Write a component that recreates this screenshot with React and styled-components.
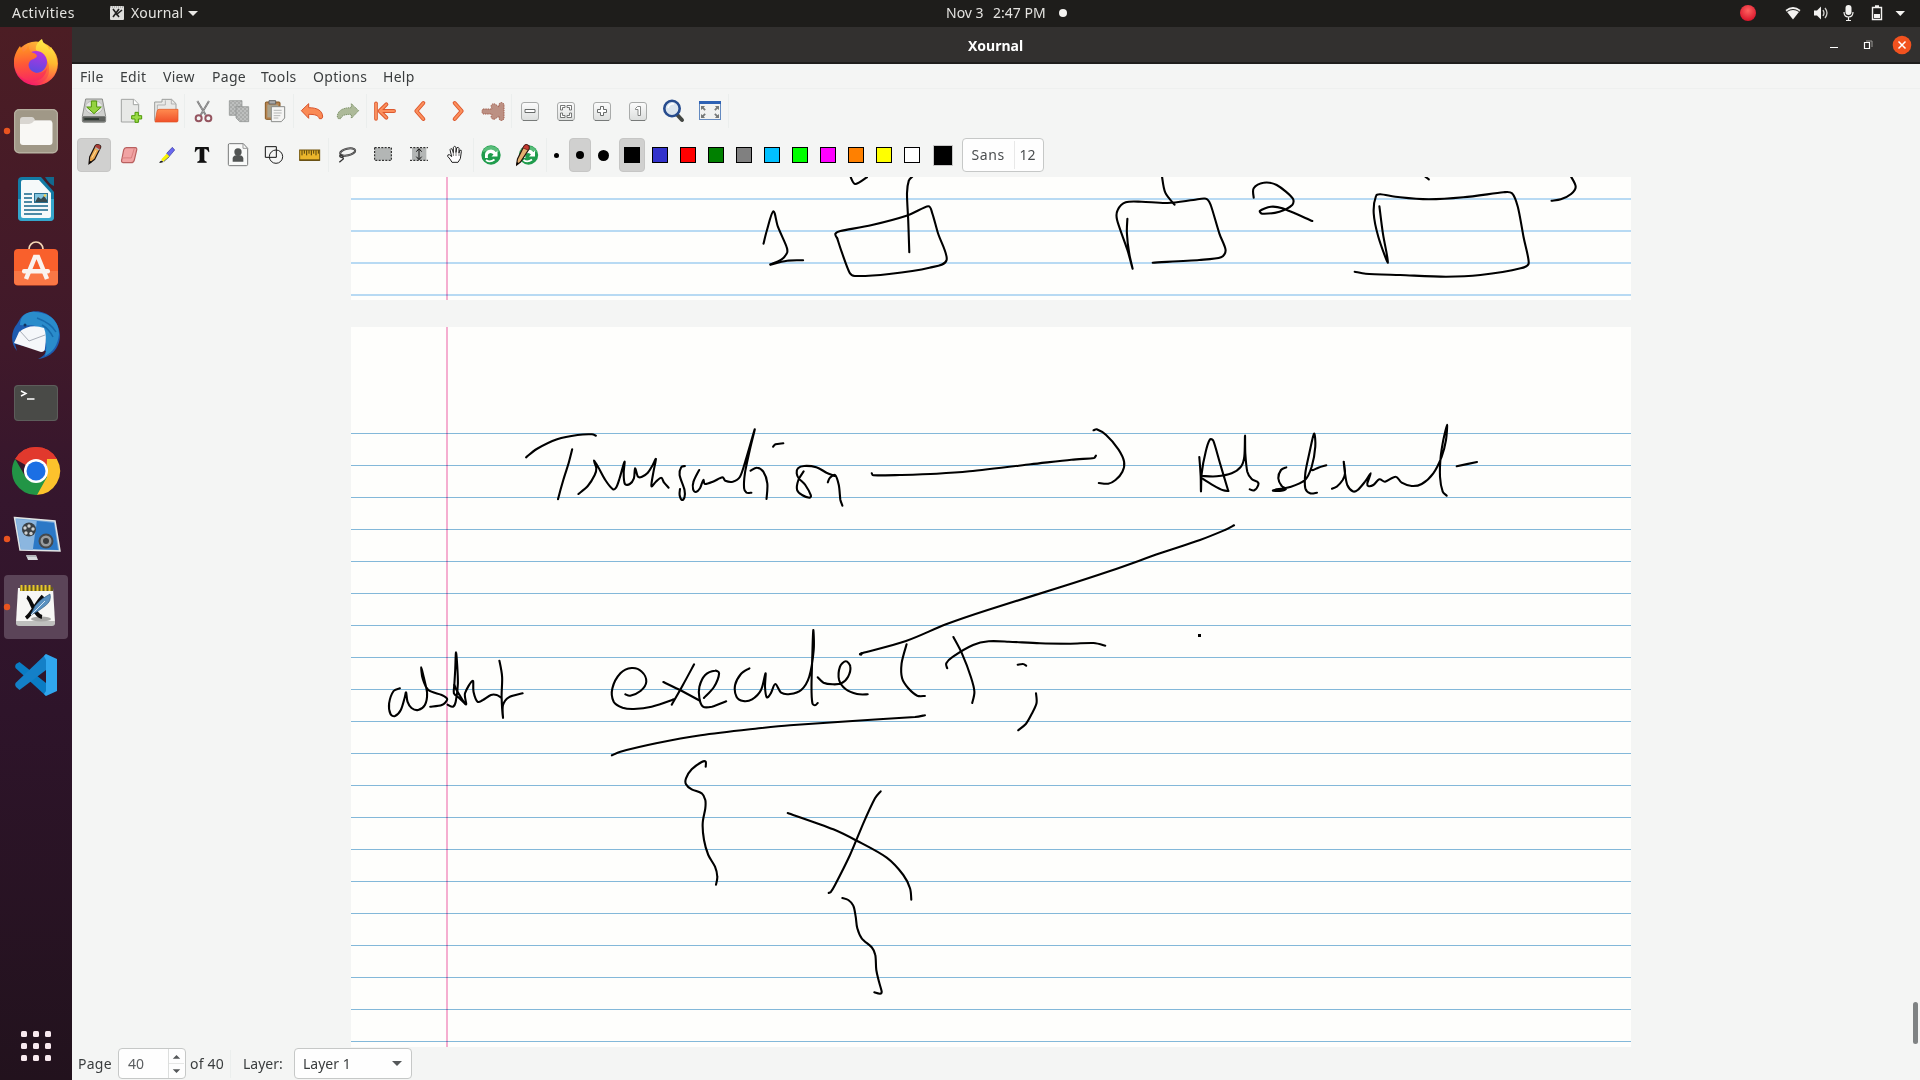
import React from "react";
import styled, { createGlobalStyle } from "styled-components";

const GlobalStyle = createGlobalStyle`
  * { box-sizing: border-box; }
  body { margin: 0; background: #f4f5f4; font-family: "Noto Sans", "Open Sans", sans-serif; font-size: 14px; line-height: 18px; }
  svg { display: block; flex: none; }
`;

const Desktop = styled.div`
  width: 1920px;
  height: 1080px;
  display: flex;
  flex-direction: column;
  overflow: hidden;
  white-space: nowrap;
`;
const TopBar = styled.header`
  height: 27px;
  flex: none;
  background: #1e1d1b;
  color: #e4e3e0;
  display: grid;
  grid-template-columns: 946px 1fr 184px;
  align-items: center;
`;
const TopGroup = styled.div`
  display: flex;
  align-items: center;
  height: 27px;
  padding-left: ${(p) => p.$pad || 0}px;
  padding-bottom: 1px;
`;
const Text = styled.span`
  width: ${(p) => (p.$w ? p.$w + "px" : "auto")};
  letter-spacing: ${(p) => p.$ls || 0}px;
  margin-left: ${(p) => p.$ml || 0}px;
  flex: none;
`;
const Below = styled.div`
  flex: 1;
  display: flex;
  min-height: 0;
`;
const Dock = styled.nav`
  width: 72px;
  flex: none;
  display: flex;
  flex-direction: column;
  justify-content: space-between;
  padding: 1px 0 0;
  background: linear-gradient(180deg, #4c1d24 0%, #40192a 30%, #35162d 45%, #2e142a 65%, #22121d 100%);
`;
const DockList = styled.div`
  display: flex;
  flex-direction: column;
`;
const AppGrid = styled.div`
  display: grid;
  grid-template-columns: repeat(3, 6px);
  gap: 6px;
  padding: 0 0 19px 21px;
`;
const GridDot = styled.i`
  height: 6px;
  border-radius: 1.5px;
  background: #f8e9ef;
`;
const Win = styled.main`
  flex: 1;
  display: flex;
  flex-direction: column;
  min-width: 0;
  background: #f4f5f4;
  color: #3a3d3e;
`;
const TitleBar = styled.div`
  height: 37px;
  flex: none;
  display: grid;
  grid-template-columns: 1fr auto 1fr;
  align-items: center;
  background: #32302f;
  border-bottom: 2px solid #1f1d1c;
  color: #fff;
  font-weight: 700;
`;
const Title = styled.span`
  padding-top: 2px;
  margin-right: 1px;
`;
const WinButtons = styled.div`
  justify-self: end;
  padding-right: 5px;
`;
const MenuBar = styled.div`
  height: 25px;
  flex: none;
  display: flex;
  align-items: center;
  padding: 2px 0 0 8px;
  border-bottom: 1px solid #eef0ef;
`;
const ToolRow = styled.div`
  height: 44px;
  flex: none;
  display: flex;
  align-items: center;
  padding-left: 4px;
`;
const Tool = styled.div`
  width: ${(p) => p.$w || 36}px;
  height: 34px;
  display: flex;
  align-items: center;
  justify-content: center;
  flex: none;
`;
const NibSizes = styled.div`
  display: flex;
  margin: 0 2px 0 -2px;
`;
const Pressed = styled.div`
  width: ${(p) => p.$w}px;
  height: 34px;
  display: flex;
  align-items: center;
  justify-content: center;
  border-radius: 4px;
  background: ${(p) => (p.$on ? "#d0d0cf" : "transparent")};
  border: 1px solid ${(p) => (p.$on ? "#c6c6c5" : "transparent")};
`;
const Sep = styled.i`
  width: 1px;
  height: 34px;
  flex: none;
  background: #ebeeed;
`;
const Dot = styled.i`
  width: ${(p) => p.$d}px;
  height: ${(p) => p.$d}px;
  border-radius: 50%;
  background: #000;
`;
const Swatch = styled.i`
  width: 16px;
  height: 16px;
  background: ${(p) => p.$c};
  border: 1px solid #000;
`;
const BigSwatch = styled.i`
  width: 20px;
  height: 21px;
  background: #000;
  border: 1px solid #c8c8c8;
`;
const FontButton = styled.div`
  width: 82px;
  height: 34px;
  display: grid;
  grid-template-columns: 52px 1fr;
  align-items: center;
  background: #fefefe;
  border: 1px solid #c6c8c7;
  border-radius: 4px;
  color: #4b4e50;
  margin-left: 2px;
`;
const FontCell = styled.span`
  height: 28px;
  line-height: 28px;
  padding-left: ${(p) => p.$pad}px;
  letter-spacing: ${(p) => p.$ls || 0}px;
  border-right: ${(p) => (p.$line ? "1px solid #e8e8e8" : "0")};
`;
const Viewport = styled.section`
  position: relative;
  height: 870px;
  flex: none;
  overflow: hidden;
  display: flex;
  flex-direction: column;
  gap: 27px;
  padding-left: 279px;
`;
const Sheet = styled.div`
  width: 1280px;
  height: ${(p) => p.$h}px;
  flex: none;
  display: flex;
  flex-direction: column;
  background: #fefefc;
  padding-top: ${(p) => p.$top}px;
  overflow: hidden;
  background-image: linear-gradient(#f5aed0, #f5aed0);
  background-size: 2px 100%;
  background-position: 95px 0;
  background-repeat: no-repeat;
`;
const Rule = styled.i`
  height: 32px;
  flex: none;
  border-top: ${(p) => (p.$soft ? "2px solid #b9dbf6" : "1px solid #84b9dc")};
  mix-blend-mode: multiply;
`;
const Ink = styled.svg`
  position: absolute;
  left: 0;
  top: 0;
`;
const ScrollThumb = styled.i`
  position: absolute;
  right: 2px;
  top: 825px;
  width: 5px;
  height: 42px;
  border-radius: 3px;
  background: #7f8283;
`;
const StatusBar = styled.footer`
  flex: 1;
  display: flex;
  align-items: center;
  padding-left: 6px;
`;
const Spin = styled.div`
  width: 68px;
  height: 31px;
  display: grid;
  grid-template-columns: 1fr 16px;
  background: #fefefe;
  border: 1px solid #c6c8c7;
  border-radius: 4px;
  color: #5c5f61;
`;
const SpinValue = styled.span`
  padding-left: 9px;
  line-height: 29px;
  border-right: 1px solid #dcdedd;
`;
const Combo = styled.div`
  width: 118px;
  height: 31px;
  display: flex;
  align-items: center;
  justify-content: space-between;
  padding: 0 9px 0 8px;
  background: #fefefe;
  border: 1px solid #c6c8c7;
  border-radius: 4px;
`;
const StatusSep = styled.i`
  width: 1px;
  height: 28px;
  margin: 0 12px 0 2px;
  background: #ebeeed;
`;

/* Pen strokes: each group has its own origin and resolution. */
const inkGroups = [
  { ox: 740, oy: 170, sx: 1.7422, sy: 3, strokes: [
    "192,18 201,42 221,22",
    "300,20 294,32 291,70 293,150 295,247",
    "41,221 47,180 58,124 66,170 81,230 82,248 72,269 53,283",
    "53,284 82,272 110,271",
    "169,203 177,245 191,308 200,318 260,312 330,293 360,270 345,190 335,130 328,109 290,137 230,165 175,183 166,192 170,207",
    "735,18 741,68 757,104",
    "675,146 674,190 678,250 684,296 675,240 657,150 658,120 672,97 700,95 745,99 790,90 812,86 820,105 835,190 846,240 838,262 800,270 719,278",
    "895,83 895,55 912,38 935,45 963,85 962,105 940,125 910,131 906,122 925,110 945,115 997,153",
    "1114,109 1120,190 1129,278 1112,200 1104,130 1108,78 1116,73 1150,82 1200,88 1260,82 1330,67 1345,70 1355,110 1365,200 1374,280 1360,295 1290,315 1230,320 1150,315 1090,311 1071,305",
    "1194,20 1200,28",
    "1448,20 1456,50 1448,72 1430,88 1414,92",
  ]},
  { ox: 500, oy: 410, sx: 2.45, sy: 3, strokes: [
    "64,142 90,117 140,88 190,75 225,73 235,77",
    "177,118 168,160 155,210 142,268",
    "192,252 215,228 232,195 236,175 230,152 240,170 258,210 277,238 285,232 293,205 305,155 303,190 306,222 318,222 328,205 331,175 338,200 348,200 362,188 374,165 382,147 376,185 371,228 382,215 395,203 402,218 413,233",
    "453,168 444,172 440,195 452,240 452,262 446,270 440,255 441,237",
    "488,180 474,215 473,238 480,246 490,235 498,210 502,222 520,216 545,202 552,212 570,215 588,200 602,150 624,58 612,120 600,190 598,235 604,248 616,248",
    "614,182 630,173 645,185 655,220 653,267",
    "669,110 675,103 694,100",
    "744,184 731,210 728,240 740,255 758,263 762,257 748,225 732,205 727,190 730,175 745,168 775,172 800,188 820,198",
    "803,217 808,204 821,195 830,225 834,270 839,287",
    "911,190 914,196 980,195 1070,191 1150,184 1300,163 1400,149 1455,144 1460,137",
    "1454,61 1462,58 1485,75 1515,118 1529,155 1525,185 1508,210 1490,221 1467,219",
  ]},
  { ox: 1060, oy: 410, sx: 3, sy: 3, strokes: [
    "418,141 422,200 423,244 425,190 437,125 450,88 460,92 480,160 505,243",
    "505,243 490,241 460,226 428,206",
    "428,198 470,199 515,190 543,170 553,140 555,77 556,130 562,185 575,207 592,215 595,225 583,241 569,238",
    "679,172 663,180 655,205 665,228 678,236 665,242 639,242 645,239 690,231 735,210 755,170 766,110 762,71 748,130 736,190 736,235 750,250 771,248",
    "753,180 760,180 775,173 799,166",
    "816,236 830,230 848,210 855,190 851,155 855,190 862,225 878,244 893,240 915,215 932,190 922,220 925,228 940,225 958,208 975,215 1007,200 1025,218 1055,228 1085,222 1120,190 1145,140 1158,90 1161,44 1150,90 1142,140 1140,200 1148,245 1160,257",
    "1190,169 1251,156",
    "522,346 495,360 420,390 300,430 150,483 0,532 -217,600 -342,643 -462,693 -592,729 -600,733",
  ]},
  { ox: 370.4, oy: 610, sx: 2.24, sy: 3, strokes: [
    "66,235 52,243 42,280 45,312 55,318 68,300 77,262 80,247 83,275 92,294 107,300 122,285 127,250 120,205 114,172 117,205 130,240 160,255 172,268 160,285 134,290",
    "173,284 185,290 191,275 196,220 192,128 190,180 188,225 187,250 197,262 214,283",
    "188,225 195,245 214,283 212,250 229,212 231,245 240,275 252,270 270,255 283,255 292,262",
    "289,152 295,200 294,260 297,323 297,285 310,262 341,250",
    "571,253 582,257 605,243 618,215 608,185 585,174 560,190 542,235 545,275 565,293 590,297 630,290 680,268",
    "725,163 700,225 675,284",
    "656,216 690,238 738,272",
    "747,264 770,230 781,190 772,182 750,195 737,230 737,265 745,290 765,290 797,274",
    "849,175 830,192 817,225 820,260 835,273 855,268 875,240 885,190 884,230 888,262 897,250 907,222 920,248 940,252 965,240 983,200 993,120 992,60 990,130 988,230 990,280 996,286 1002,279",
    "1002,202 1015,218 1035,223 1055,220 1070,200 1075,170 1065,154 1052,170 1050,210 1065,238 1090,252 1114,253",
    "1201,103 1190,160 1191,205 1205,235 1225,257 1242,258",
    "1292,175 1290,160 1305,140 1350,105 1385,94 1430,95 1500,100 1568,101 1620,99 1646,107",
    "1306,81 1325,130 1345,200 1353,245 1348,279",
    "1450,164 1462,162 1469,167",
    "1491,250 1492,280 1480,315 1468,342 1451,361",
    "541,436 560,425 640,400 740,376 870,355 940,346 1080,333 1220,321 1242,316",
    "1097,132 1101,129 1099,134",
  ]},
  { ox: 660, oy: 740, sx: 3, sy: 3, strokes: [
    "137,80 137,65 125,66 95,88 78,115 78,133 95,148 125,160 136,180 136,205 128,250 132,300 145,345 165,380 172,410 168,434",
    "383,219 520,268 590,302 680,353 730,405 750,445 754,479",
    "662,154 645,175 610,250 570,345 525,435 513,455 506,459",
    "547,474 565,480 580,497 587,530 592,565 605,595 635,622 646,645 649,690 657,725 665,755 660,761 643,757",
  ]},
];

const smooth = (g, text) => {
  const p = text.split(" ").map((s) => {
    const [x, y] = s.split(",").map(Number);
    return [g.ox + x / g.sx, g.oy + y / g.sy];
  });
  const f = (n) => n.toFixed(1);
  let d = `M${f(p[0][0])} ${f(p[0][1])}`;
  for (let i = 0; i < p.length - 1; i++) {
    const a = p[i - 1] || p[i], b = p[i], c = p[i + 1], e = p[i + 2] || c;
    const len = Math.hypot(c[0] - b[0], c[1] - b[1]);
    const k1 = Math.min(1 / 6, len / (3 * (Math.hypot(c[0] - a[0], c[1] - a[1]) || 1)));
    const k2 = Math.min(1 / 6, len / (3 * (Math.hypot(e[0] - b[0], e[1] - b[1]) || 1)));
    d += `C${f(b[0] + (c[0] - a[0]) * k1)} ${f(b[1] + (c[1] - a[1]) * k1)} ${f(c[0] - (e[0] - b[0]) * k2)} ${f(c[1] - (e[1] - b[1]) * k2)} ${f(c[0])} ${f(c[1])}`;
  }
  return d;
};

function Handwriting() {
  return (
    <Ink width="1848" height="870" viewBox="72 177 1848 870">
      <g fill="none" stroke="#000" strokeWidth="2.1" strokeLinecap="round" strokeLinejoin="round">
        {inkGroups.map((g, i) => g.strokes.map((s, j) => <path key={i + "-" + j} d={smooth(g, s)} />))}
      </g>
      <rect x="1198" y="634" width="3" height="3" />
    </Ink>
  );
}

/* Dock icons share one tall drawing space; each slot is 68 units high. */
const dockIcons = [
  <g>
    <circle cx="36" cy="63.5" r="22" fill="url(#ff)" />
    <path d="M36 50c-1-5 3-9 6-11c1 4 3 5 5 7c1 1 2 2 2 4l2-3c1 2 3 5 4 7c7 17-4 30-18 31c8-3 13-8 12-17c0-9-7-14-13-18z" fill="url(#ffy)" />
    <circle cx="36" cy="62" r="11" fill="url(#ffp)" />
    <path d="M14 62c0-7 3-12 6-16l3 6c2-1 4-2 5-7c1 3 1 5 3 7c2 1 5 1 6 4c-1 3-5 3-7 5c-4 5 1 12 8 12c4 0 7-2 9-5c-1 9-8 14-16 13c-10-1-17-9-17-19z" fill="url(#ffo)" />
  </g>,
  <g>
    <rect x="14" y="109" width="44" height="44.500" rx="5" fill="#a09887" />
    <rect x="14.700" y="109.700" width="42.600" height="43" rx="4.500" fill="none" stroke="#bcb5a7" />
    <path d="M20 120q0-3 3-3h9q2 0 3 3h15q2 0 2 2v21H20z" fill="#d9d6d1" />
    <path d="M20 124h9q3 0 5-3h16q2.500 0 2.500 2.500V142q0 3-3 3H23q-3 0-3-3z" fill="#f9f8f5" />
    <circle cx="7" cy="131" r="3.200" fill="#e95420" />
  </g>,
  <g>
    <path d="M22 177h19l13 15v25q0 4-4 4H22q-4 0-4-4v-36q0-4 4-4z" fill="#137ba5" />
    <path d="M18 199h36v18q0 4-4 4H22q-4 0-4-4z" fill="#35a6cc" />
    <path d="M45 177h9v9q-5-2-9-9z" fill="#12698e" />
    <path d="M23 180h16l12 13v23q0 2-2 2H23q-2 0-2-2v-34q0-2 2-2z" fill="#f6f9fa" />
    <path d="M24 194h8M24 198h8M24 202h8M24 206h24M24 210h24M24 214h18" stroke="#16668b" strokeWidth="1.700" />
    <rect x="34" y="193" width="14" height="10" fill="#2a7090" />
    <rect x="35" y="194" width="12" height="8" fill="#82c4df" />
    <path d="M35 202l3-5 3 2 3-3 3 4v2z" fill="#374a4f" />
    <circle cx="45" cy="195.500" r="1.300" fill="#f3d04c" />
  </g>,
  <g>
    <path d="M29 251v-2a7 7 0 0 1 14 0v2" fill="none" stroke="#f5d7b5" strokeWidth="1.700" />
    <rect x="14" y="249" width="44" height="36.500" rx="4" fill="#f9602c" />
    <path d="M14 271h44v10q0 4-4 4H18q-4 0-4-4z" fill="#fa7745" />
    <path d="M26 279l9-22h3l9 22" fill="none" stroke="#faf3ef" strokeWidth="4.500" />
    <rect x="22" y="269" width="28" height="4.500" rx="2" fill="#faf3ef" />
  </g>,
  <g>
    <path d="M28 313c13-6 31 4 32 22c0 14-10 23-22 24c4-2 7-4 8-8l-31-7l2 7c-7-8-6-20 0-27l3-5q3-5 8-6z" fill="#1d5bb0" />
    <path d="M20 325c0-9 7-14 15-13c17 1 24 11 24 22c-1 11-6 18-14 22c3-10 1-24-8-29c-5-3-10-1-17-2z" fill="#2a8ccb" />
    <path d="M37 318c8 3 15 7 19 14M42 325q7 4 11 12" fill="none" stroke="#176bad" strokeWidth="1.500" />
    <path d="M19 332q11-9 25-4q3 7 1 20q0 4-4 4l-27-9z" fill="#f5f7fa" />
    <path d="M20 331l9 10 16-6" fill="none" stroke="#a8adb7" strokeWidth="1" />
    <circle cx="25" cy="325" r="1.500" fill="#103460" />
  </g>,
  <g>
    <rect x="14" y="385" width="44" height="36" rx="4" fill="#494a47" />
    <rect x="14.500" y="385.500" width="43" height="35" rx="3.500" fill="none" stroke="#5d5d5b" />
    <path d="M21 391l5 2.500-5 2.500M27 399h7.500" fill="none" stroke="#fff" strokeWidth="1.400" />
  </g>,
  <g>
    <path d="M15.200 459A24 24 0 0 1 56.800 459H36z" fill="#e1392d" />
    <path d="M36 471L15.200 459A24 24 0 0 1 56.800 459z" fill="#e1392d" />
    <path d="M56.800 459A24 24 0 0 1 36 495L46.400 477L47 459z" fill="#fcc22c" />
    <path d="M15.200 459A24 24 0 0 0 37 495L47 477L36 471L25.600 477z" fill="#229546" />
    <circle cx="36" cy="471" r="12" fill="#fff" />
    <circle cx="36" cy="471" r="9.500" fill="#1b6fe4" />
  </g>,
  <g>
    <path d="M14.500 517.500L55 521l5 30-40-1z" fill="#6fa5da" stroke="#e1e4e4" strokeWidth="1.500" />
    <path d="M16 519l20 2-3 29-12-1z" fill="#8bb6df" />
    <path d="M37 521l17 2 4 27-25-1z" fill="#2b78c6" />
    <circle cx="29" cy="529.500" r="7" fill="#3b4044" />
    <g fill="#cdd0d1"><circle cx="29" cy="526" r="1.700" /><circle cx="33" cy="529" r="1.700" /><circle cx="31" cy="533.500" r="1.700" /><circle cx="26" cy="533" r="1.700" /><circle cx="25" cy="528" r="1.700" /></g>
    <circle cx="46" cy="541" r="7.500" fill="#45484b" /><circle cx="46" cy="541" r="5.500" fill="#999c9e" /><circle cx="46" cy="541" r="3" fill="#3a3d40" />
    <path d="M26 555h10l2 5H28z" fill="#d5d8da" /><path d="M26 556h10" stroke="#8e9397" />
    <circle cx="7" cy="539" r="3.200" fill="#e95420" />
  </g>,
  <g>
    <rect x="4" y="575" width="64" height="64" rx="4" fill="#5b4458" />
    <path d="M18 588h35l2 34q0 3-3 3H19q-3 0-3-3z" fill="#f7f7f5" />
    <path d="M16 621h39v2q0 3-3 3H19q-3 0-3-3z" fill="#bfc0be" />
    <ellipse cx="41" cy="619" rx="10" ry="2.500" fill="#a8a8a6" />
    <rect x="20" y="587" width="33" height="4" fill="#675a1f" />
    <path d="M21.500 585v6M25.500 585v6M29.500 585v6M33.500 585v6M37.500 585v6M41.500 585v6M45.500 585v6M49.500 585v6" stroke="#e8c72d" strokeWidth="2" />
    <path d="M27 597c4 1 7 19 15 20M43 596c-6 6-11 18-17 22" fill="none" stroke="#0b0b0b" strokeWidth="3.800" />
    <path d="M31 614l4-8q5-7 15-12q2 7-5 12-6 5-14 9z" fill="#5a91c0" stroke="#2a5277" strokeWidth=".6" />
    <path d="M31 615l14-14" stroke="#d7e6f2" strokeWidth="1" />
    <circle cx="7" cy="607" r="3.200" fill="#e95420" />
  </g>,
  <g>
    <path d="M16 664l3.500-2L46 683v13L15.500 668q-1-2 .5-4z" fill="#0a7cc4" />
    <path d="M16 687l3.500 3L46 670V654L15.500 683q-1 2 .5 4z" fill="#1480c8" />
    <path d="M46 654l11 5v32l-11 5-2-2 2-3v-31l-2-4z" fill="#30a6ee" />
  </g>,
];

const I = ({ vb = "0 0 24 24", w = 24, h, children }) => (
  <svg width={w} height={h || w} viewBox={vb}>{children}</svg>
);

/* Icons drawn on a fine grid, 108 units to a 36 pixel cell. */
const Fine = ({ x, y, children }) => (
  <svg width="36" height="34" viewBox={`${x - 54} ${y - 51} 108 102`}>{children}</svg>
);

const ZoomBox = ({ children }) => (
  <I><rect x="3.500" y="3.500" width="17" height="18" rx="2.500" fill="url(#zb)" stroke="#a9abaa" /><path d="M5 21.500h14" stroke="#777a79" />{children}</I>
);

const row1 = [
  [
    <Fine x={282} y={333}>
      <path d="M257 297h50l10 52v14q0 4-4 4h-62q-4 0-4-4v-14z" fill="#cfd0ce" stroke="#8b8d8a" strokeWidth="3" />
      <ellipse cx="282" cy="322" rx="26" ry="20" fill="#e5e6e4" stroke="#aaa" strokeWidth="2" />
      <rect x="248" y="349" width="68" height="16" rx="3" fill="#5d605d" /><path d="M253 357h44" stroke="#26322b" strokeWidth="5" />
      <path d="M274 303h16v18h14l-22 20-22-20h14z" fill="#94d340" stroke="#4f9406" strokeWidth="3" />
    </Fine>,
    <Fine x={390} y={333}>
      <path d="M364 298h38l14 15v53h-52z" fill="#e8e9e7" stroke="#a2a4a2" strokeWidth="3" /><path d="M400 298v16h16" fill="#fff" stroke="#a2a4a2" strokeWidth="3" />
      <path d="M405 337h10v10h10v10h-10v10h-10v-10h-10v-10h10z" fill="#9adb46" stroke="#4e9a06" strokeWidth="3" />
    </Fine>,
    <Fine x={498} y={333}>
      <path d="M464 362v-56h22v-8h29l13 13v44" fill="#e9e9e7" stroke="#9c9e9c" strokeWidth="3" /><path d="M514 298v14h13M472 348v-33h24v-14" fill="none" stroke="#aaa" strokeWidth="2.500" />
      <path d="M477 328h57v34q0 4-4 4h-65l6-32q1-6 6-6z" fill="url(#folder)" stroke="#df5320" strokeWidth="2" />
    </Fine>,
  ],
  [
    <Fine x={609} y={333}>
      <path d="M592 303l25 42M627 303l-25 42" stroke="#777" strokeWidth="6" /><path d="M592 303l25 42M627 303l-25 42" stroke="#d5d7d6" strokeWidth="2" strokeDasharray="3 2" />
      <circle cx="596" cy="355" r="9" fill="none" stroke="#955560" strokeWidth="6" /><circle cx="625" cy="355" r="9" fill="none" stroke="#955560" strokeWidth="6" />
    </Fine>,
    <Fine x={717} y={333}>
      <g fill="url(#hatch)" stroke="#8a8d8b" strokeWidth="2"><path d="M688 302h38v44h-38z" /><path d="M708 320h38v45h-27l-11-11z" /></g>
    </Fine>,
    <Fine x={825} y={333}>
      <rect x="796" y="306" width="44" height="52" rx="3" fill="#b68350" stroke="#845720" strokeWidth="3" /><rect x="802" y="314" width="32" height="38" fill="#aaa38d" />
      <path d="M807 302h20v10h-20z" fill="#aaa" stroke="#666" strokeWidth="3" />
      <path d="M814 320h40v34l-10 11h-30z" fill="#f5f5f4" stroke="#8a8c8a" strokeWidth="3" /><path d="M821 331h24M821 339h24M821 347h20M821 354h14" stroke="#a7a9a8" strokeWidth="2.500" />
    </Fine>,
  ],
  [
    <Fine x={936} y={333}>
      <path d="M904 332l22-21v12c26 0 42 9 42 28l-3 5h-7c-3-10-12-13-32-13v12z" fill="#fa8a55" stroke="#d8532a" strokeWidth="3" strokeLinejoin="round" />
    </Fine>,
    <Fine x={1044} y={333}>
      <path d="M1076 332l-22-21v12c-26 0-42 9-42 28l3 5h7c3-10 12-13 32-13v12z" fill="#adba99" stroke="#7c9166" strokeWidth="3" strokeDasharray="4 2" strokeLinejoin="round" />
    </Fine>,
  ],
  [
    <Fine x={1155} y={333}>
      <path d="M1128 310v47" stroke="#dd592e" strokeWidth="11" strokeLinecap="round" /><path d="M1128 310v47" stroke="#ff9b68" strokeWidth="5" strokeLinecap="round" />
      <g fill="none" strokeLinecap="round" strokeLinejoin="round"><path d="M1182 333h-42M1159 313l-20 20 20 20" stroke="#dd592e" strokeWidth="12" /><path d="M1182 333h-42M1159 313l-20 20 20 20" stroke="#fc8f5c" strokeWidth="6" /></g>
    </Fine>,
    <Fine x={1263} y={333}>
      <g fill="none" strokeLinecap="round" strokeLinejoin="round"><path d="M1270 309l-21 24 21 24" stroke="#dd592e" strokeWidth="12" /><path d="M1270 309l-21 24 21 24" stroke="#fc8f5c" strokeWidth="6" /></g>
    </Fine>,
    <Fine x={1371} y={333}>
      <g fill="none" strokeLinecap="round" strokeLinejoin="round"><path d="M1364 309l21 24-21 24" stroke="#dd592e" strokeWidth="12" /><path d="M1364 309l21 24-21 24" stroke="#fc8f5c" strokeWidth="6" /></g>
    </Fine>,
    <I><path d="M2 10h9l-1-3q1-3 4-2l4 3V5q2-3 5 0v15q-3 3-5 0v-3l-4 3q-3 1-4-2l1-3H2q-2-2.500 0-5z" fill="#bc9083" stroke="#a3604f" strokeDasharray="1.500 .8" /></I>,
  ],
  [
    <ZoomBox><path d="M7 10.500h10v3H7z" fill="#fff" stroke="#686b6a" /></ZoomBox>,
    <ZoomBox><path d="M6.500 11V6.500h4.500v2H8.500V11zM17.500 11V6.500H13v2h2.500V11zM6.500 14v4.500h4.500v-2H8.500V14zM17.500 14v4.500H13v-2h2.500V14z" fill="#fff" stroke="#666968" strokeWidth=".9" /></ZoomBox>,
    <ZoomBox><path d="M10.500 7.500h3v3h3v3h-3v3h-3v-3h-3v-3h3z" fill="#fff" stroke="#686b6a" /></ZoomBox>,
    <ZoomBox><path d="M9.500 9.500l2-2h3v9h-2.500v-6h-2.500z" fill="#fff" stroke="#7a7d7c" strokeWidth=".9" /></ZoomBox>,
    <I><path d="M14.500 15l5.500 6" stroke="#444743" strokeWidth="4" strokeLinecap="round" /><circle cx="10" cy="9.500" r="7.700" fill="#dce6ef" stroke="#274c8e" strokeWidth="2.600" /><path d="M6 9a5 5 0 0 1 6-4" fill="none" stroke="#fff" strokeWidth="1.500" /></I>,
    <I><rect x="1.500" y="2.500" width="21" height="18" fill="#f1f2f1" stroke="#648ac0" /><rect x="1" y="2" width="22" height="3" fill="#2d61b4" /><g fill="#777a79"><path d="M3 7h4L5.800 8.500l2 2-1.300 1.300-2-2L3 11zM21 7h-4l1.200 1.500-2 2 1.300 1.300 2-2L21 11zM3 19h4l-1.200-1.500 2-2-1.300-1.300-2 2L3 15zM21 19h-4l1.200-1.500-2-2 1.300-1.300 2 2L21 15z" /></g></I>,
  ],
];

const Recycle = () => (
  <g>
    <circle cx="11" cy="12" r="9.700" fill="#1f9c4c" /><path d="M2.500 9a9 9 0 0 1 17 0q-8-3-17 0z" fill="#7ed498" opacity=".6" />
    <path d="M5 15q-1.500-8 6-8.500q3 0 5 2.500l1.500-1.500v6h-6l2-2q-1-1.500-3-1.500q-3.500.5-2.500 5z" fill="#fff" />
    <path d="M6 17q4 3 8.500-.5" fill="none" stroke="#fff" strokeWidth="1.800" />
  </g>
);

const row2 = [
  [
    <Fine x={280} y={465}>
      <path d="M265 491l2-20 17-34q5-6 13-1q5 3 2 8l-17 34z" fill="#eba84f" stroke="#1b1210" strokeWidth="3.500" /><path d="M284 437q6-6 13-1q5 3 2 8l-3 6-14-7z" fill="#a93e37" /><path d="M284 443l12 7" stroke="#b4b6b4" strokeWidth="4" /><path d="M274 473l12-22" stroke="#ffe0a0" strokeWidth="3" /><path d="M265 492l2-10 7 4z" fill="#000" />
    </Fine>,
    <Fine x={390} y={465}>
      <path d="M379 443h27q6 1 4 7l-7 30q-2 8-9 8h-25q-6-1-4-8l6-30q2-7 8-7z" fill="#f1a3a3" stroke="#b9605f" strokeWidth="3.500" /><path d="M366 474q15-1 28 0l9-29" fill="none" stroke="#da7f7f" strokeWidth="3" />
    </Fine>,
    <Fine x={496} y={465}>
      <path d="M498 460l17-18 7 8-16 19z" fill="#6868ef" stroke="#36369f" strokeWidth="2" /><path d="M482 478l16-17 8 8-17 15q-4 2-7-6z" fill="#f6f200" /><path d="M477 487l6-4 3 3z" fill="#111" stroke="#111" strokeWidth="2.500" /><path d="M489 485l17-15" stroke="#222" strokeWidth="2" />
    </Fine>,
    <Fine x={606} y={465}>
      <path d="M588 443h38l2 14h-3q-3-9-13-9v32q0 4 7 5v3h-27v-3q7-1 7-5v-32q-9 0-12 9h-3z" fill="#aaa" /><path d="M586 441h40l2 14h-3q-3-9-12-9v34q0 4 7 5v3h-28v-3q7-1 7-5v-34q-9 0-12 9h-3z" fill="#111" />
    </Fine>,
    <Fine x={714} y={465}>
      <path d="M688 431h42l13 14v48q0 4-4 4h-50q-4 0-4-4v-58q0-4 3-4z" fill="#f9faf9" stroke="#777a79" strokeWidth="3" /><path d="M729 431v14h14" fill="none" stroke="#999" strokeWidth="3" /><circle cx="714" cy="456" r="11" fill="#515453" /><path d="M698 485v-11q2-9 16-9t16 9v11z" fill="#515453" />
    </Fine>,
    <Fine x={822} y={465}>
      <path d="M796 440h33v32h-33z" fill="none" stroke="#111" strokeWidth="3" /><circle cx="828" cy="470" r="20" fill="none" stroke="#222" strokeWidth="3" />
    </Fine>,
    <Fine x={930} y={465}>
      <rect x="899" y="450" width="60" height="31" fill="#ebb52b" stroke="#725408" strokeWidth="3" /><path d="M906 451v15M913 451v10M920 451v15M927 451v10M934 451v15M941 451v10M948 451v15M955 451v10" stroke="#332705" strokeWidth="2.500" /><path d="M899 480h60" stroke="#4c3808" strokeWidth="3" />
    </Fine>,
  ],
  [
    <Fine x={1041} y={465}>
      <ellipse cx="1043" cy="456" rx="23" ry="10" transform="rotate(-12 1043 456)" fill="none" stroke="#333" strokeWidth="6" /><ellipse cx="1043" cy="456" rx="23" ry="10" transform="rotate(-12 1043 456)" fill="none" stroke="#bbb" strokeWidth="1.500" /><path d="M1022 464q-7 5 3 8t1 8l-8 7M1022 464l9 7" fill="none" stroke="#333" strokeWidth="4" />
    </Fine>,
    <Fine x={1149} y={465}>
      <rect x="1124" y="443" width="50" height="38" fill="#b3b6b5" stroke="#111" strokeWidth="3" strokeDasharray="6 4" />
    </Fine>,
    <Fine x={1257} y={465}>
      <rect x="1236" y="443" width="43" height="38" fill="#b3b6b5" /><path d="M1230 443h54M1230 481h54" stroke="#111" strokeWidth="3" strokeDasharray="6 4" /><path d="M1257 447v31M1249 455l8-9 8 9M1249 470l8 9 8-9" fill="none" stroke="#111" strokeWidth="3" />
    </Fine>,
    <Fine x={1365} y={465}>
      <path d="M1356 487q-5-10-13-18q-1-6 5-5l7 6-5-21q2-6 7-1l3 10v-16q4-6 8 0v15l2-13q5-5 7 1v14l2-8q6-3 5 4l-3 21-7 11z" fill="#fff" stroke="#222" strokeWidth="3" strokeLinejoin="round" /><path d="M1360 457v11M1368 456v12M1377 458v10" stroke="#333" strokeWidth="2" />
    </Fine>,
  ],
  [
    <I><Recycle /></I>,
    <I><g transform="translate(1.500 0)"><Recycle /></g><path d="M.5 22l1-6L8 3q2-3 5 0v3L4.500 19z" fill="#e5b070" stroke="#21130d" strokeWidth="1.200" /><path d="M8 3q2-3 5 0v3l-1 1-5-2z" fill="#c63a31" stroke="#561b17" strokeWidth=".7" /><path d="M.5 22l.5-3L3 20.500z" /></I>,
  ],
];

const swatches = ["#000000", "#3333cc", "#ff0000", "#008000", "#808080", "#00c0ff", "#00ff00", "#ff00ff", "#ff8000", "#ffff00", "#ffffff"];
const menus = [["File", 40], ["Edit", 43], ["View", 49], ["Page", 49], ["Tools", 52], ["Options", 70], ["Help", 40]];

const Group = ({ icons, pressedFirst }) => (
  <>
    {icons.map((icon, i) => (
      <Tool key={i}>{pressedFirst && i === 0 ? <Pressed $w={34} $on>{icon}</Pressed> : icon}</Tool>
    ))}
    <Sep />
  </>
);

const DefsSvg = styled.svg`
  position: absolute;
`;

function Defs() {
  return (
    <DefsSvg width="0" height="0">
      <defs>
        <linearGradient id="ff" x1=".8" y1="0" x2=".3" y2="1"><stop offset="0" stopColor="#ffcf35" /><stop offset=".5" stopColor="#ff7139" /><stop offset="1" stopColor="#f5156c" /></linearGradient>
        <linearGradient id="ffy" x1=".5" y1="0" x2=".4" y2="1"><stop offset="0" stopColor="#fff04a" /><stop offset=".5" stopColor="#ffb92f" /><stop offset="1" stopColor="#ff3d4d" /></linearGradient>
        <linearGradient id="ffo" x1=".4" y1="0" x2=".5" y2="1"><stop offset="0" stopColor="#ff9a20" /><stop offset=".5" stopColor="#ff5a36" /><stop offset="1" stopColor="#f82a5e" /></linearGradient>
        <linearGradient id="ffp" x1=".6" y1="0" x2=".4" y2="1"><stop offset="0" stopColor="#b833e1" /><stop offset="1" stopColor="#5a4be0" /></linearGradient>
        <linearGradient id="folder" x1="0" y1="0" x2="0" y2="1"><stop offset="0" stopColor="#ff8b4f" /><stop offset="1" stopColor="#f0502a" /></linearGradient>
        <linearGradient id="zb" x1="0" y1="0" x2="0" y2="1"><stop offset="0" stopColor="#fcfcfc" /><stop offset="1" stopColor="#dcdedd" /></linearGradient>
        <radialGradient id="rec" cx=".5" cy=".35" r=".65"><stop offset="0" stopColor="#ff625f" /><stop offset="1" stopColor="#d9142b" /></radialGradient>
        <pattern id="hatch" width="4" height="4" patternUnits="userSpaceOnUse"><rect width="4" height="4" fill="#d9dbda" /><path d="M0 0h2v2H0zM2 2h2v2H2z" fill="#8d908e" /></pattern>
      </defs>
    </DefsSvg>
  );
}

export default function App() {
  return (
    <Desktop>
      <GlobalStyle />
      <Defs />
      <TopBar>
        <TopGroup $pad={12}>
          <Text $w={98} $ls={0.45}>Activities</Text>
          <I vb="0 0 14 14" w={14}><rect width="14" height="14" rx="1" fill="#dededc" /><path d="M0 1h14" stroke="#888" strokeDasharray="1 1" /><path d="M3 3l6 8M9 3l-6 8M6 9l6-5" stroke="#222" strokeWidth="1.600" /></I>
          <Text $w={57} $ml={7} $ls={0.15}>Xournal</Text>
          <I vb="0 0 10 5" w={10} h={5}><path d="M0 0h10L5 5z" fill="#e9e8e5" /></I>
        </TopGroup>
        <TopGroup>
          <Text $w={47}>Nov 3</Text>
          <Text $w={66}>2:47 PM</Text>
          <I vb="0 0 8 8" w={8}><circle cx="4" cy="4" r="4" fill="#f4f3f1" /></I>
        </TopGroup>
        <svg width="184" height="27" viewBox="1736 0 184 27">
          <circle cx="1748" cy="13" r="8" fill="url(#rec)" />
          <path d="M1785.500 10q7.500-6 15 0l-7.500 9.500z" fill="#f4f3f1" /><path d="M1787 11.500q6-4 12 0" fill="none" stroke="#1e1d1b" strokeWidth="1" />
          <path d="M1814 10.500h3l4-4v13l-4-4h-3z" fill="#f4f3f1" /><path d="M1823 10q2 3 0 6M1825 8q4 5 0 10" fill="none" stroke="#d0cfcc" strokeWidth="1.300" />
          <rect x="1845.500" y="5" width="6" height="10" rx="3" fill="#f4f3f1" /><path d="M1844 12q0 5 4.500 5t4.500-5M1848.500 17v3M1846 20.500h5" fill="none" stroke="#f4f3f1" strokeWidth="1.200" />
          <path d="M1872.500 7.500h9v12h-9zM1875 6h4" fill="none" stroke="#f4f3f1" strokeWidth="1.400" /><path d="M1874 14h6v4h-6z" fill="#f4f3f1" />
          <path d="M1895.500 11h9.500l-4.700 5z" fill="#f4f3f1" />
        </svg>
      </TopBar>
      <Below>
        <Dock>
          <DockList>
            {dockIcons.map((icon, i) => (
              <svg key={i} width="72" height="68" viewBox={`0 ${28 + 68 * i} 72 68`}>{icon}</svg>
            ))}
          </DockList>
          <AppGrid>{Array.from({ length: 9 }, (_, i) => <GridDot key={i} />)}</AppGrid>
        </Dock>
        <Win>
          <TitleBar>
            <span />
            <Title>Xournal</Title>
            <WinButtons>
              <svg width="90" height="34" viewBox="1825 28 90 34">
                <path d="M1830 47.500h8" stroke="#fff" />
                <path d="M1864.500 42.500h5v6h-5z" fill="none" stroke="#fff" strokeWidth="1.200" /><path d="M1866 41h6v6" fill="none" stroke="#9a9896" />
                <circle cx="1902" cy="45" r="9.300" fill="#f2521f" /><path d="M1898.500 41.500l7 7M1905.500 41.500l-7 7" stroke="#fff" strokeWidth="1.500" />
              </svg>
            </WinButtons>
          </TitleBar>
          <MenuBar>{menus.map(([m, w]) => <Text key={m} $w={w} $ls={0.3}>{m}</Text>)}</MenuBar>
          <ToolRow>{row1.map((g, i) => <Group key={i} icons={g} />)}</ToolRow>
          <ToolRow>
            {row2.map((g, i) => <Group key={i} icons={g} pressedFirst={i === 0} />)}
            <NibSizes>
              {[5, 8, 11].map((d, i) => <Tool key={d} $w={23.5}><Pressed $w={22} $on={i === 1}><Dot $d={d} /></Pressed></Tool>)}
            </NibSizes>
            {swatches.map((c, i) => <Tool key={c} $w={28}><Pressed $w={26} $on={i === 0}><Swatch $c={c} /></Pressed></Tool>)}
            <Tool $w={34}><BigSwatch /></Tool>
            <FontButton><FontCell $pad={9} $ls={0.6} $line>Sans</FontCell><FontCell $pad={5}>12</FontCell></FontButton>
          </ToolRow>
          <Viewport>
            <Sheet $h={123} $top={21}>{[0, 1, 2, 3].map((i) => <Rule key={i} $soft />)}</Sheet>
            <Sheet $h={720} $top={106}>{Array.from({ length: 20 }, (_, i) => <Rule key={i} />)}</Sheet>
            <Handwriting />
            <ScrollThumb />
          </Viewport>
          <StatusBar>
            <Text $w={40} $ls={0.25}>Page</Text>
            <Spin>
              <SpinValue>40</SpinValue>
              <I vb="0 0 16 29" w={15} h={29}><path d="M0 14.500h16" stroke="#e4e5e4" /><path d="M4 9.500h8L8 5.500zM4 20.500h8l-4 4z" fill="#55585a" /></I>
            </Spin>
            <Text $w={38} $ml={4} $ls={0.2}>of 40</Text>
            <StatusSep />
            <Text $w={51}>Layer:</Text>
            <Combo><span>Layer 1</span><I vb="0 0 10 5" w={10} h={5}><path d="M0 0h10L5 5z" fill="#55585a" /></I></Combo>
          </StatusBar>
        </Win>
      </Below>
    </Desktop>
  );
}
